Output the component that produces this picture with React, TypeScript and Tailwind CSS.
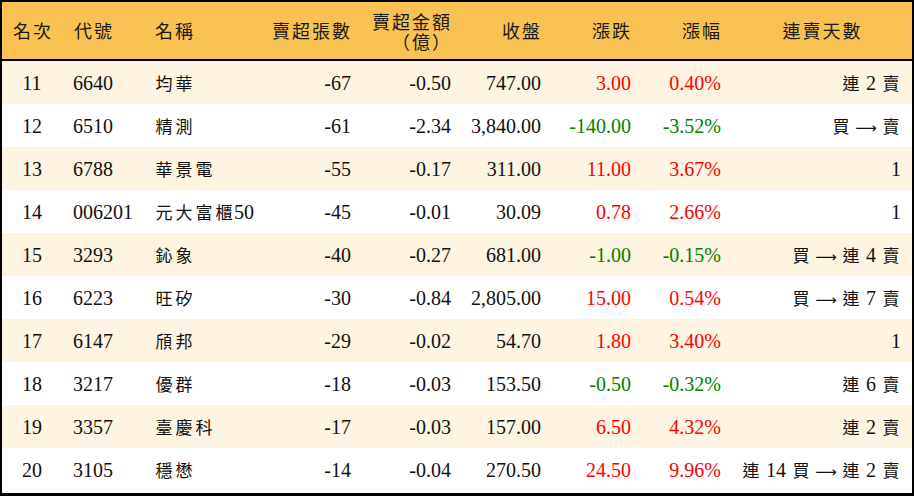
import React from "react";

type Row = [number, string, string, string, string, string, string, string, string];

const rows: Row[] = [
  [11, "6640", "均華", "-67", "-0.50", "747.00", "3.00", "0.40%", "連 2 賣"],
  [12, "6510", "精測", "-61", "-2.34", "3,840.00", "-140.00", "-3.52%", "買 → 賣"],
  [13, "6788", "華景電", "-55", "-0.17", "311.00", "11.00", "3.67%", "1"],
  [14, "006201", "元大富櫃50", "-45", "-0.01", "30.09", "0.78", "2.66%", "1"],
  [15, "3293", "鈊象", "-40", "-0.27", "681.00", "-1.00", "-0.15%", "買 → 連 4 賣"],
  [16, "6223", "旺矽", "-30", "-0.84", "2,805.00", "15.00", "0.54%", "買 → 連 7 賣"],
  [17, "6147", "頎邦", "-29", "-0.02", "54.70", "1.80", "3.40%", "1"],
  [18, "3217", "優群", "-18", "-0.03", "153.50", "-0.50", "-0.32%", "連 6 賣"],
  [19, "3357", "臺慶科", "-17", "-0.03", "157.00", "6.50", "4.32%", "連 2 賣"],
  [20, "3105", "穩懋", "-14", "-0.04", "270.50", "24.50", "9.96%", "連 14 買 → 連 2 賣"],
];

function isCJK(ch: string) {
  const c = ch.codePointAt(0) || 0;
  return (c >= 0x2e80 && c <= 0x9fff) || (c >= 0xff00 && c <= 0xffef) || (c >= 0x3000 && c <= 0x303f);
}

function K({ t, head = false }: { t: string; head?: boolean }) {
  const out: React.ReactNode[] = [];
  let buf = "";
  const flush = () => {
    if (buf) {
      out.push(buf);
      buf = "";
    }
  };
  Array.from(t).forEach((ch, i) => {
    if (isCJK(ch)) {
      flush();
      out.push(
        <span
          key={i}
          className={
            head
              ? "inline-block w-[20px] text-center text-[18px]"
              : "inline-block w-[20px] text-center text-[17px]"
          }
        >
          {ch}
        </span>
      );
    } else if (ch === "→") {
      flush();
      out.push(
        <span
          key={i}
          className="inline-flex w-[20px] justify-center overflow-visible text-[15px] leading-[20px] font-[family-name:'DejaVu_Sans',sans-serif]"
        >
          ⟶
        </span>
      );
    } else {
      buf += ch;
    }
  });
  flush();
  return <span className="whitespace-pre">{out}</span>;
}

const cols = "grid grid-cols-[60px_82px_117px_100px_100px_90px_90px_90px_1fr]";

export default function App() {
  return (
    <div className="w-[914px] h-[496px] bg-white border-2 border-b-[3px] border-black font-[family-name:'Liberation_Serif','Noto_Sans_CJK_TC',serif] text-[20px] text-[#111] whitespace-nowrap overflow-hidden">
      <div className={`${cols} h-[59px] bg-[#f9c152] border-b-2 border-black text-[#1a1a1a]`}>
        <div className="flex items-center justify-center">
          <K t="名次" head />
        </div>
        <div className="flex items-center pl-[11px]">
          <K t="代號" head />
        </div>
        <div className="flex items-center pl-[10px]">
          <K t="名稱" head />
        </div>
        <div className="flex items-center justify-end pr-[10px]">
          <K t="賣超張數" head />
        </div>
        <div className="flex flex-col items-end justify-center pr-[10px] leading-[19px] pt-[4px]">
          <div>
            <K t="賣超金額" head />
          </div>
          <div>
            <K t="（億）" head />
          </div>
        </div>
        <div className="flex items-center justify-end pr-[10px]">
          <K t="收盤" head />
        </div>
        <div className="flex items-center justify-end pr-[10px]">
          <K t="漲跌" head />
        </div>
        <div className="flex items-center justify-end pr-[10px]">
          <K t="漲幅" head />
        </div>
        <div className="flex items-center justify-center">
          <K t="連賣天數" head />
        </div>
      </div>
      {rows.map((r, idx) => {
        const neg = r[6].startsWith("-");
        const color = neg ? "text-[#008000]" : "text-[#ff0000]";
        return (
          <div
            key={r[0]}
            className={`${cols} h-[43px] ${idx % 2 === 0 ? "bg-[#fdf5e1]" : "bg-white"}`}
          >
            <div className="flex items-center justify-center">{r[0]}</div>
            <div className="flex items-center pl-[11px]">{r[1]}</div>
            <div className="flex items-center pl-[10px]">
              <K t={r[2]} />
            </div>
            <div className="flex items-center justify-end pr-[10px]">{r[3]}</div>
            <div className="flex items-center justify-end pr-[10px]">{r[4]}</div>
            <div className="flex items-center justify-end pr-[10px]">{r[5]}</div>
            <div className={`flex items-center justify-end pr-[10px] ${color}`}>{r[6]}</div>
            <div className={`flex items-center justify-end pr-[10px] ${color}`}>{r[7]}</div>
            <div className="flex items-center justify-end pr-[11px]">
              <K t={r[8]} />
            </div>
          </div>
        );
      })}
    </div>
  );
}
